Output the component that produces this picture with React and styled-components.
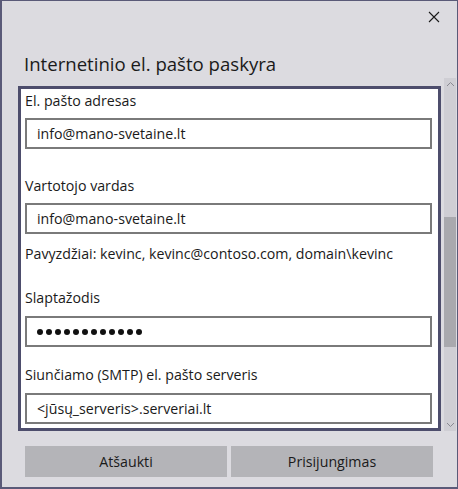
import React from "react";
import styled, { createGlobalStyle } from "styled-components";

const GlobalStyle = createGlobalStyle`
  html, body {
    margin: 0;
    padding: 0;
    background: #dcdbe0;
  }
  * {
    box-sizing: border-box;
  }
`;

function App() {
  return (
    <>
      <GlobalStyle />
      <Window>
        <TitleBar>
          <CloseButton aria-label="Uždaryti">
            <svg width="12" height="12" viewBox="0 0 12 12">
              <path d="M1 1L11 11M11 1L1 11" stroke="#1a1a1a" strokeWidth="1.1" />
            </svg>
          </CloseButton>
        </TitleBar>
        <Title>Internetinio el. pašto paskyra</Title>

        <Body>
          <Panel>
            <Label>El. pašto adresas</Label>
            <Input gap={7}>info@mano-svetaine.lt</Input>

            <Label top={27}>Vartotojo vardas</Label>
            <Input gap={7}>info@mano-svetaine.lt</Input>
            <Hint>Pavyzdžiai: kevinc, kevinc@contoso.com, domain\kevinc</Hint>

            <Label top={24}>Slaptažodis</Label>
            <Input gap={8}>
              {Array.from({ length: 12 }).map((_, i) => (
                <Dot key={i} />
              ))}
            </Input>

            <Label top={18}>Siunčiamo (SMTP) el. pašto serveris</Label>
            <Input gap={8}>&lt;jūsų_serveris&gt;.serveriai.lt</Input>
          </Panel>

          <Scrollbar>
            <Arrow>
              <svg width="9" height="6" viewBox="0 0 9 6">
                <path d="M1 5L4.5 1.5L8 5" stroke="#8a8a92" strokeWidth="1" fill="none" />
              </svg>
            </Arrow>
            <Track>
              <Thumb />
            </Track>
            <Arrow>
              <svg width="9" height="6" viewBox="0 0 9 6">
                <path d="M1 1L4.5 4.5L8 1" stroke="#8a8a92" strokeWidth="1" fill="none" />
              </svg>
            </Arrow>
          </Scrollbar>
        </Body>

        <Footer>
          <Button>Atšaukti</Button>
          <Button>Prisijungimas</Button>
        </Footer>
      </Window>
    </>
  );
}

const Window = styled.div`
  width: 458px;
  height: 489px;
  border: 1px solid #5a5a78;
  border-left-width: 2px;
  border-bottom-width: 2px;
  background: #dcdbe0;
  display: flex;
  flex-direction: column;
  font-family: "Open Sans", "Liberation Sans", sans-serif;
  color: #1a1a1a;
  overflow: hidden;
`;

const TitleBar = styled.div`
  height: 31px;
  display: flex;
  justify-content: flex-end;
  align-items: center;
`;

const CloseButton = styled.div`
  width: 46px;
  height: 31px;
  display: flex;
  align-items: center;
  justify-content: center;
`;

const Title = styled.h1`
  margin: 18px 0 0 22px;
  height: 28px;
  font-size: 18.6px;
  line-height: 28px;
  font-weight: 400;
  color: #1a1a1a;
`;

const Body = styled.div`
  display: flex;
  height: 353px;
  margin-left: 16px;
`;

const Panel = styled.div`
  width: 423px;
  height: 345px;
  margin-top: 8px;
  border: 3px solid #4d4d6c;
  background: #ffffff;
  padding: 2px 6px 0 4px;
  display: flex;
  flex-direction: column;
  overflow: hidden;
`;

const Label = styled.div`
  margin-top: ${(p) => p.top || 0}px;
  height: 20px;
  font-size: 14.2px;
  line-height: 20px;
  white-space: nowrap;
`;

const Hint = styled(Label)`
  margin-top: 10px;
`;

const Input = styled.div`
  margin-top: ${(p) => p.gap}px;
  flex: none;
  height: 31px;
  border: 2px solid #7a7a7a;
  padding-left: 10px;
  display: flex;
  align-items: center;
  gap: 3px;
  font-size: 14.2px;
  white-space: nowrap;
`;

const Dot = styled.span`
  width: 6px;
  height: 6px;
  border-radius: 50%;
  background: #111;
  flex: none;
`;

const Scrollbar = styled.div`
  width: 12px;
  margin-left: 3px;
  background: #cfced4;
  display: flex;
  flex-direction: column;
`;

const Arrow = styled.div`
  height: 12px;
  display: flex;
  align-items: center;
  justify-content: center;
`;

const Track = styled.div`
  flex: 1;
  padding-top: 127px;
`;

const Thumb = styled.div`
  height: 130px;
  background: #a9a9ae;
`;

const Footer = styled.div`
  display: flex;
  gap: 4px;
  margin: 15px 0 0 23px;
`;

const Button = styled.div`
  width: 202px;
  height: 31px;
  background: #b4b4b8;
  display: flex;
  align-items: center;
  justify-content: center;
  font-size: 14.2px;
  color: #1a1a1a;
`;

export default App;
